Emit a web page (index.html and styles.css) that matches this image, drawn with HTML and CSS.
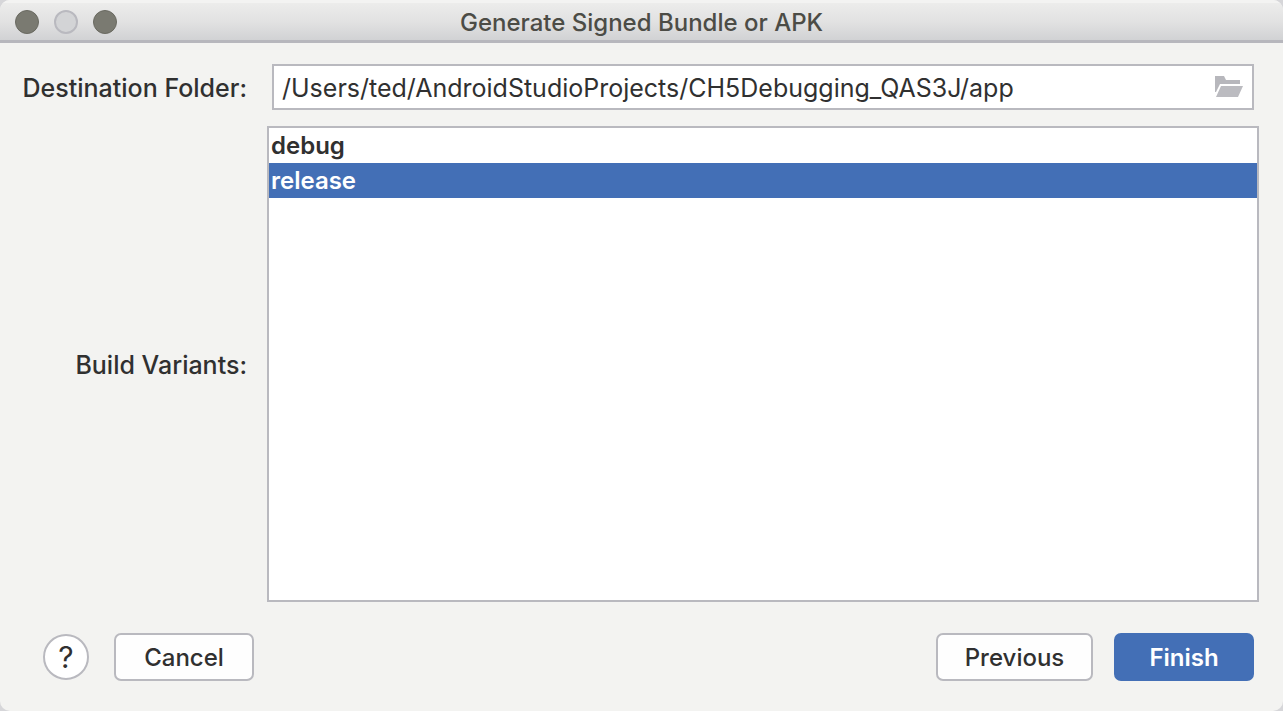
FILE: index.html
```html
<!DOCTYPE html>
<html lang="en">
<head>
<meta charset="utf-8">
<title>Generate Signed Bundle or APK</title>
<link rel="stylesheet" href="styles.css">
</head>
<body>
<main class="window">
  <header class="titlebar">
    <div class="lights">
      <button class="light" type="button" aria-label="Close"></button>
      <button class="light light-off" type="button" aria-label="Minimize" disabled></button>
      <button class="light" type="button" aria-label="Zoom"></button>
    </div>
    <h1 class="title">Generate Signed Bundle or APK</h1>
  </header>
  <form class="form">
    <div class="fields">
      <label class="label" for="destination">Destination Folder:</label>
      <div class="path">
        <input class="path-input" id="destination" type="text" value="/Users/ted/AndroidStudioProjects/CH5Debugging_QAS3J/app" spellcheck="false">
        <button class="browse" type="button" aria-label="Browse">
          <svg width="30" height="24" viewBox="0 0 30 24"><path d="M1 1h9l2 4h14v4H6L2 17H1z" fill="#b7b7bc"/><path d="M7 11h22l-5 11H2z" fill="#bbbbc0"/></svg>
        </button>
      </div>
      <label class="label" for="variants">Build Variants:</label>
      <select class="variants" id="variants" multiple>
        <option class="variant">debug</option>
        <option class="variant" selected>release</option>
      </select>
    </div>
    <footer class="actions">
      <button class="help" type="button" aria-label="Help">?</button>
      <button class="button" type="button">Cancel</button>
      <span class="spacer"></span>
      <button class="button button-wide" type="button">Previous</button>
      <button class="button button-primary" type="submit">Finish</button>
    </footer>
  </form>
</main>
</body>
</html>
```
FILE: styles.css
```css
* { box-sizing: border-box; }

body {
  margin: 0;
  background: #d6d6d9;
  color: #303030;
  font: 500 25px/32px Inter, Roboto, "Liberation Sans", sans-serif;
}

button, input, select { font: inherit; color: inherit; }

.window {
  display: flex;
  flex-direction: column;
  min-height: 100vh;
  overflow: hidden;
  border-radius: 10px;
  background: #f3f3f1;
}

.titlebar {
  display: grid;
  grid-template-columns: 1fr auto 1fr;
  align-items: center;
  height: 43px;
  border-top: 3px solid #f3f3f2;
  border-bottom: 3px solid #b7b7bd;
  background: linear-gradient(#ececeb, #e2e2e2 50%, #d1d2d4);
}

.lights { display: flex; gap: 15px; padding-left: 15px; }

.light {
  width: 24px;
  height: 24px;
  padding: 0;
  border: 1px solid #696960;
  border-radius: 50%;
  background: #7a7a71;
}

.light-off { border: 2px solid #b9b9bf; background: #d3d4d6; }

.title {
  margin: 0;
  padding-top: 2px;
  color: #4c4c46;
  font-size: 24px;
  font-weight: 500;
}

.form { display: flex; flex: 1; flex-direction: column; }

.fields {
  display: grid;
  flex: 1;
  grid-template-columns: 247px 1fr;
  grid-template-rows: auto 1fr;
  align-items: center;
  gap: 16px 20px;
  padding: 21px 24px 0 0;
}

.label { padding-top: 1px; text-align: right; }

.path {
  display: flex;
  align-items: center;
  height: 46px;
  margin: 0 5px;
  padding: 0 8px;
  border: 2px solid #b9b9bf;
  background: #fff;
}

.path-input {
  flex: 1;
  min-width: 0;
  padding: 2px 0 0;
  border: 0;
  outline: 0;
  background: none;
  font-weight: 400;
}

.browse { display: flex; padding: 0; border: 0; background: none; }

.variants {
  align-self: stretch;
  width: 100%;
  height: 100%;
  padding: 0;
  border: 2px solid #b9b9bf;
  border-radius: 0;
  outline: 0;
  background: #fff;
  overflow: hidden;
}

.variant {
  min-height: 35px;
  padding: 3px 2px 1px;
  font-size: 24px;
  font-weight: 600;
  line-height: 31px;
}

.variant:checked {
  background: linear-gradient(#436fb6, #436fb6);
  -webkit-text-fill-color: #fff;
}

.actions {
  display: flex;
  align-items: center;
  padding: 31px 29px 30px 43px;
}

.help {
  width: 46px;
  height: 46px;
  margin-right: 25px;
  padding: 0;
  border: 2px solid #b9b9bf;
  border-radius: 50%;
  background: #fff;
  font-size: 30px;
  font-weight: 400;
}

.button {
  width: 140px;
  height: 48px;
  padding: 2px 0 0;
  border: 2px solid #b9b9bf;
  border-radius: 7px;
  background: #fefefe;
  font-size: 24px;
}

.button-wide { width: 157px; margin-right: 21px; }

.button-primary { border-color: #436fb6; background: #436fb6; color: #fff; font-weight: 600; }

.spacer { flex: 1; }
```
